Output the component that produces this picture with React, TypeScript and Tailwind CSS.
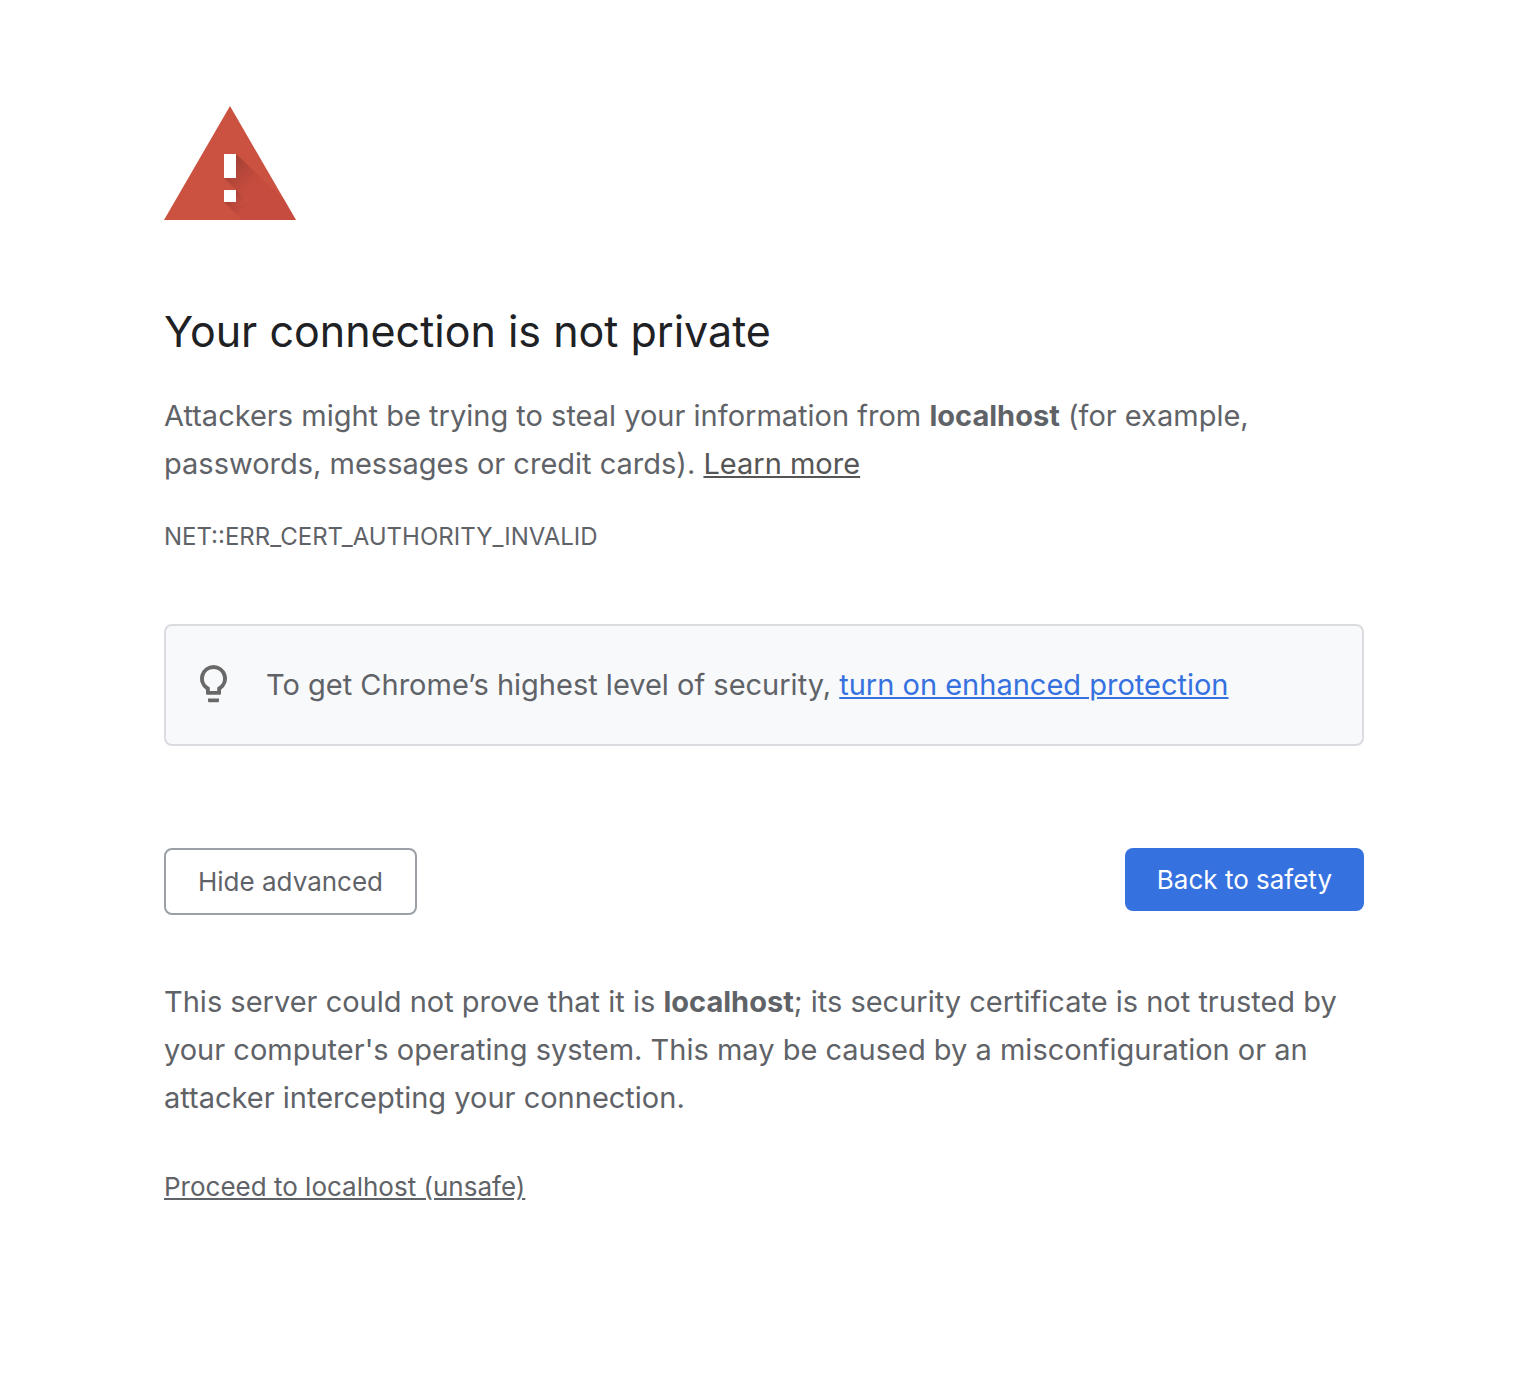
export default function App() {
  return (
    <main className="min-h-screen bg-white pt-[106px] pr-[74px] pb-16 pl-16 font-[Inter,'Liberation_Sans',sans-serif] text-[29px] leading-[48px] text-[#5f6368]">
      <div className="mx-auto w-full max-w-[1200px]">
        <svg className="h-[114px] w-[132px]" viewBox="0 0 132 114" role="img" aria-label="Warning">
          <defs>
            <linearGradient id="stem-shade" x1="66" y1="60" x2="88" y2="82" gradientUnits="userSpaceOnUse">
              <stop offset="0" stopColor="#8e3a31" stopOpacity="0.65" />
              <stop offset="1" stopColor="#b53f38" stopOpacity="0.25" />
            </linearGradient>
            <linearGradient id="dot-shade" x1="66" y1="90" x2="80" y2="104" gradientUnits="userSpaceOnUse">
              <stop offset="0" stopColor="#8e3a31" stopOpacity="0.65" />
              <stop offset="1" stopColor="#b53f38" stopOpacity="0" />
            </linearGradient>
          </defs>
          <path d="M66 0 132 114H0Z" fill="#cb5140" />
          <path d="M72 48 120 93 132 114H78L60 96V72Z" fill="#b53f38" fillOpacity="0" />
          <path d="M72 48 120 93 132 114H102L60 72Z" fill="url(#stem-shade)" />
          <path d="M84 96 102 114H78L66 102Z" fill="#b53f38" fillOpacity="0.25" />
          <path d="M72 84 102 114H78L60 96Z" fill="url(#dot-shade)" />
          <path d="M60 48h12v24H60zM60 84h12v12H60z" fill="#fff" />
        </svg>
        <h1 className="mt-[79px] text-[43px] leading-[64px] text-[#202124]">Your connection is not private</h1>
        <p className="mt-[29px]">
          Attackers might be trying to steal your information from <strong>localhost</strong> (for example, passwords, messages or credit cards).{' '}
          <a href="#learn" className="text-[#555555] underline">Learn more</a>
        </p>
        <p className="mt-[25px] text-[24px]">NET::ERR_CERT_AUTHORITY_INVALID</p>
        <section className="mt-[63px] flex items-center gap-[38px] rounded-lg border-2 border-[#dadce0] bg-[#f8f9fb] px-[34px] py-[35px]">
          <svg className="h-10 w-7 shrink-0" viewBox="0 0 28 40" fill="#696969" aria-hidden="true">
            <path fillRule="evenodd" d="M13.5 0A13.5 13.5 0 0 0 6 24.7V28.7Q6 29.8 7.1 29.8H19.9Q21 29.8 21 28.7V24.7A13.5 13.5 0 0 0 13.5 0ZM13.5 4A9.5 9.5 0 0 1 18.6 21.5L17.2 22.5V26H9.8V22.5L8.4 21.5A9.5 9.5 0 0 1 13.5 4Z" />
            <path d="M8 33.5H19V36Q19 37.2 17.8 37.2H9.2Q8 37.2 8 36Z" />
          </svg>
          <p>To get Chrome’s highest level of security, <a href="#protection" className="text-[#3671e0] underline">turn on enhanced protection</a></p>
        </section>
        <div className="mt-[102px] flex items-start justify-between text-[26px] leading-[31px]">
          <button className="rounded-lg border-2 border-[#9aa0a6] px-8 py-4">Hide advanced</button>
          <button className="rounded-lg bg-[#3671e0] px-8 py-4 text-white">Back to safety</button>
        </div>
        <p className="mt-[63px]">
          This server could not prove that it is <strong>localhost</strong>; its security certificate is not trusted by your computer's operating system. This may be caused by a misconfiguration or an attacker intercepting your connection.
        </p>
        <a href="#proceed" className="mt-12 inline-block text-[26px] leading-[34px] underline">Proceed to localhost (unsafe)</a>
      </div>
    </main>
  );
}
